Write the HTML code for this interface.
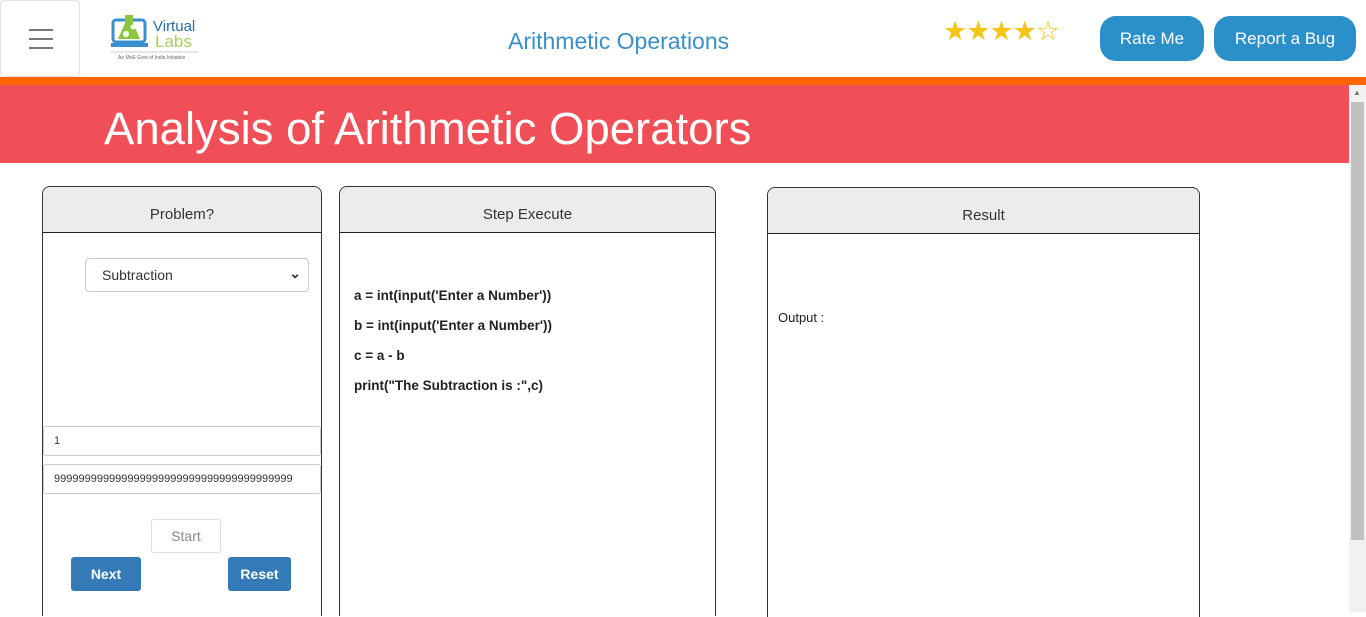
<!DOCTYPE html>
<html><head><meta charset="utf-8"><style>
*{box-sizing:border-box;margin:0;padding:0}
body{width:1366px;height:612px;overflow:hidden;background:#fff;font-family:"Liberation Sans",sans-serif;position:relative}
.abs{position:absolute}
.menu{left:0;top:0;width:80px;height:77px;border:1px solid #e3e3e3;border-radius:4px}
.menu i{position:absolute;left:28px;width:24px;height:2px;background:#777}
.btn{background:#2b8fc9;color:#fff;border-radius:16px;font-size:17px;text-align:center;line-height:45px;height:45px;top:16px}
.panel{border:1px solid #333;border-radius:8px 8px 0 0;border-bottom:none;top:186px;height:430px}
.ph{background:#ececec;border-bottom:1px solid #222;height:46px;border-radius:8px 8px 0 0;text-align:center;font-size:15px;color:#333;line-height:56px}
.code{font-size:13.5px;font-weight:bold;color:#222;left:354px}
.inp{left:43px;width:278px;height:30px;border:1px solid #ccc;border-radius:3px;font-size:11px;color:#333;padding-left:10px;line-height:28px;overflow:hidden;white-space:nowrap}
.bb{background:#337ab7;color:#fff;font-size:14px;font-weight:bold;text-align:center;line-height:34px;height:34px;border-radius:3px;top:557px}
</style></head><body>
<div class="abs menu"><i style="top:28px"></i><i style="top:37px"></i><i style="top:46px"></i></div>
<svg class="abs" style="left:110px;top:12px" width="92" height="50" viewBox="0 0 92 50">
<rect x="3" y="8" width="32" height="22" rx="3" fill="none" stroke="#3a8fcf" stroke-width="3"/>
<rect x="1" y="31" width="37" height="4" fill="#3a8fcf"/>
<path d="M15 3h8v8l7 16h-22l7-16z" fill="#8cc63f"/>
<circle cx="16" cy="22" r="3" fill="#fff"/><circle cx="23" cy="15" r="2.5" fill="#fff"/>
<text x="43" y="19" font-size="15" fill="#2b6ea5" font-family="Liberation Sans">Virtual</text>
<text x="45" y="35" font-size="17" fill="#a8d060" font-family="Liberation Sans">Labs</text>
<line x1="0" y1="40" x2="88" y2="40" stroke="#ccc"/>
<text x="8" y="47" font-size="5" fill="#666">An MoE Govt of India Initiative</text>
</svg>
<div class="abs" style="left:508px;top:28px;font-size:23px;color:#3a8fc8">Arithmetic Operations</div>
<div class="abs" style="left:943px;top:16px;font-size:27px;color:#f5c518;letter-spacing:-1px">★★★★☆</div>
<div class="abs btn" style="left:1100px;width:104px">Rate Me</div>
<div class="abs btn" style="left:1214px;width:142px">Report a Bug</div>
<div class="abs" style="left:0;top:77px;width:1366px;height:8px;background:#ff6600"></div>
<div class="abs" style="left:0;top:85px;width:1349px;height:78px;background:#f04f57"></div>
<div class="abs" style="left:104px;top:103px;font-size:45.5px;color:#fff;font-family:'Liberation Sans',sans-serif">Analysis of Arithmetic Operators</div>
<div class="abs" style="left:1349px;top:85px;width:17px;height:527px;background:#f1f1f1"></div>
<div class="abs" style="left:1351px;top:102px;width:13px;height:438px;background:#c1c1c1"></div>
<div class="abs" style="left:1353px;top:88px;font-size:8px;color:#777">▲</div>

<div class="abs panel" style="left:42px;width:280px"><div class="ph">Problem?</div></div>
<div class="abs panel" style="left:339px;width:377px"><div class="ph">Step Execute</div></div>
<div class="abs panel" style="left:767px;width:433px;top:187px"><div class="ph">Result</div></div>

<div class="abs" style="left:85px;top:258px;width:224px;height:34px;border:1px solid #ccc;border-radius:4px;font-size:14px;color:#333;line-height:32px;padding-left:16px">Subtraction<span style="position:absolute;right:7px;top:-2px;font-size:14px;font-weight:bold">&#8964;</span></div>
<div class="abs inp" style="top:426px">1</div>
<div class="abs inp" style="top:464px">999999999999999999999999999999999999999</div>
<div class="abs" style="left:151px;top:519px;width:70px;height:34px;border:1px solid #ddd;border-radius:3px;font-size:14px;color:#888;text-align:center;line-height:32px">Start</div>
<div class="abs bb" style="left:71px;width:70px">Next</div>
<div class="abs bb" style="left:228px;width:63px">Reset</div>

<div class="abs code" style="top:288px">a = int(input('Enter a Number'))</div>
<div class="abs code" style="top:318px">b = int(input('Enter a Number'))</div>
<div class="abs code" style="top:348px">c = a - b</div>
<div class="abs code" style="top:378px">print("The Subtraction is :",c)</div>
<div class="abs" style="left:778px;top:310px;font-size:13px;color:#222">Output :</div>
</body></html>
